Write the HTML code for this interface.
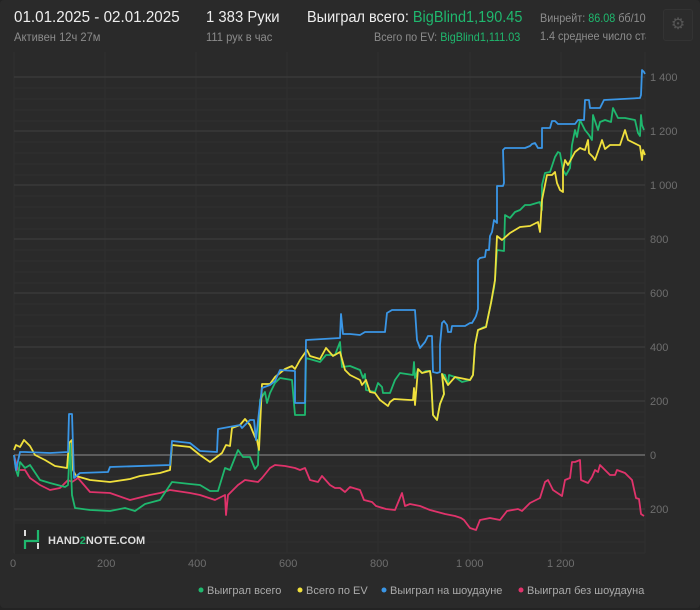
<!DOCTYPE html>
<html><head><meta charset="utf-8"><style>
html,body{margin:0;padding:0;background:#232323;width:700px;height:610px;overflow:hidden;font-family:"Liberation Sans",sans-serif}
.card{position:absolute;left:0;top:0;width:700px;height:608px;background:#2a2a2a;border-radius:4px}
.t{position:absolute;white-space:nowrap;transform-origin:0 0}
</style></head><body>
<div class="card"></div>
<div class="t" style="left:14px;top:9px;font-size:16px;color:#eee;transform:scaleX(0.95)">01.01.2025 - 02.01.2025</div>
<div class="t" style="left:14px;top:30px;font-size:12px;color:#8c8c8c;transform:scaleX(0.93)">Активен 12ч 27м</div>
<div class="t" style="left:206px;top:9px;font-size:16px;color:#eee;transform:scaleX(0.93)">1 383 Руки</div>
<div class="t" style="left:206px;top:30px;font-size:12px;color:#8c8c8c;transform:scaleX(0.93)">111 рук в час</div>
<div class="t" style="left:307px;top:9px;font-size:16px;color:#eee;transform:scaleX(0.905)">Выиграл всего: <span style="color:#1fb86e">BigBlind1,190.45</span></div>
<div class="t" style="left:374px;top:30px;font-size:12px;color:#8c8c8c;transform:scaleX(0.9)">Всего по EV: <span style="color:#1fb86e">BigBlind1,111.03</span></div>
<div style="position:absolute;left:540px;top:11px;width:106px;height:36px;overflow:hidden">
<div class="t" style="left:0;top:0;font-size:12px;color:#8c8c8c;transform:scaleX(0.9)">Винрейт: <span style="color:#1fb86e">86.08</span> бб/100</div>
<div class="t" style="left:0;top:18px;font-size:12px;color:#8c8c8c;transform:scaleX(0.9)">1.4 среднее число ставок</div>
</div>
<div style="position:absolute;left:663px;top:9px;width:28px;height:30px;border:1px solid #333;border-radius:3px;background:#2c2c2c;color:#555;font-size:16px;text-align:center;line-height:30px">⚙</div>
<svg style="position:absolute;left:0;top:0" width="700" height="610">
<g stroke="#303030" stroke-width="1">
<line x1="14" y1="88" x2="645" y2="88"/><line x1="14" y1="99" x2="645" y2="99"/><line x1="14" y1="110" x2="645" y2="110"/><line x1="14" y1="121" x2="645" y2="121"/>
<line x1="14" y1="142" x2="645" y2="142"/><line x1="14" y1="153" x2="645" y2="153"/><line x1="14" y1="164" x2="645" y2="164"/><line x1="14" y1="175" x2="645" y2="175"/>
<line x1="14" y1="196" x2="645" y2="196"/><line x1="14" y1="207" x2="645" y2="207"/><line x1="14" y1="218" x2="645" y2="218"/><line x1="14" y1="229" x2="645" y2="229"/>
<line x1="14" y1="250" x2="645" y2="250"/><line x1="14" y1="261" x2="645" y2="261"/><line x1="14" y1="272" x2="645" y2="272"/><line x1="14" y1="283" x2="645" y2="283"/>
<line x1="14" y1="304" x2="645" y2="304"/><line x1="14" y1="315" x2="645" y2="315"/><line x1="14" y1="326" x2="645" y2="326"/><line x1="14" y1="337" x2="645" y2="337"/>
<line x1="14" y1="358" x2="645" y2="358"/><line x1="14" y1="369" x2="645" y2="369"/><line x1="14" y1="380" x2="645" y2="380"/><line x1="14" y1="391" x2="645" y2="391"/>
<line x1="14" y1="412" x2="645" y2="412"/><line x1="14" y1="423" x2="645" y2="423"/><line x1="14" y1="434" x2="645" y2="434"/><line x1="14" y1="445" x2="645" y2="445"/>
<line x1="14" y1="466" x2="645" y2="466"/><line x1="14" y1="477" x2="645" y2="477"/><line x1="14" y1="488" x2="645" y2="488"/><line x1="14" y1="499" x2="645" y2="499"/>
<line x1="14" y1="520" x2="645" y2="520"/><line x1="14" y1="531" x2="645" y2="531"/><line x1="14" y1="542" x2="645" y2="542"/><line x1="14" y1="553" x2="645" y2="553"/>
<line x1="14" y1="52" x2="14" y2="553"/><line x1="105" y1="52" x2="105" y2="553"/><line x1="196" y1="52" x2="196" y2="553"/><line x1="287" y1="52" x2="287" y2="553"/><line x1="378" y1="52" x2="378" y2="553"/><line x1="470" y1="52" x2="470" y2="553"/><line x1="561" y1="52" x2="561" y2="553"/><line x1="645" y1="52" x2="645" y2="553"/>
</g>
<g stroke="#404040" stroke-width="1">
<line x1="14" y1="77" x2="645" y2="77"/><line x1="14" y1="131" x2="645" y2="131"/><line x1="14" y1="185" x2="645" y2="185"/><line x1="14" y1="239" x2="645" y2="239"/><line x1="14" y1="293" x2="645" y2="293"/><line x1="14" y1="347" x2="645" y2="347"/><line x1="14" y1="401" x2="645" y2="401"/><line x1="14" y1="509" x2="645" y2="509"/>
</g>
<line x1="14" y1="455" x2="645" y2="455" stroke="#7a7a7a" stroke-width="1.2"/>
<g fill="#6e6e6e" font-size="11" font-family="Liberation Sans,sans-serif">
<text x="650" y="81">1 400</text><text x="650" y="135">1 200</text><text x="650" y="189">1 000</text><text x="650" y="243">800</text><text x="650" y="297">600</text><text x="650" y="351">400</text><text x="650" y="405">200</text><text x="650" y="459">0</text><text x="650" y="513">200</text>
<text x="10" y="567">0</text><text x="97" y="567">200</text><text x="188" y="567">400</text><text x="279" y="567">600</text><text x="370" y="567">800</text><text x="456" y="567">1 000</text><text x="547" y="567">1 200</text>
</g>
<rect x="15" y="524" width="125" height="30" fill="#272727"/>
<g stroke="#ddd" stroke-width="2"><line x1="25" y1="530" x2="25" y2="536"/><line x1="38" y1="543" x2="38" y2="549"/></g>
<path d="M25 549 V541 H38 V530" stroke="#1fb86e" stroke-width="2.2" fill="none"/>
<text x="48" y="544" fill="#ddd" font-size="11" font-weight="bold" font-family="Liberation Sans,sans-serif">HAND<tspan fill="#1fb86e">2</tspan>NOTE.COM</text>
<g fill="none" stroke-width="1.8" stroke-linejoin="round">
<polyline stroke="#e0336b" points="14,455 18,470 25,470 30,478 40,485 50,490 60,488 68,480 72,482 78,478 90,492 110,493 130,500 150,495 160,493 170,490 190,493 200,495 215,500 225,495 226,515 228,495 238,485 245,480 258,482 262,478 270,468 275,465 285,466 295,468 300,470 305,468 310,480 318,482 322,476 330,485 335,488 340,488 345,492 350,487 360,490 364,500 372,502 376,506 386,509 395,510 402,493 405,506 410,504 420,506 430,510 445,514 455,516 461,518 464,520 470,528 476,530 480,520 490,518 500,520 507,511 518,509 522,511 530,503 540,498 545,482 548,480 553,490 562,496 565,480 570,478 572,462 575,462 580,460 581,480 588,483 592,477 595,470 598,472 600,465 605,470 610,475 615,475 617,470 625,473 632,480 636,498 639,499 641,514 644,516"/>
<polyline stroke="#1fb86e" points="14,455 16,470 18,476 20,462 25,468 30,465 40,480 50,483 65,487 68,485 70,443 72,495 75,508 90,510 110,511 125,508 135,511 145,504 160,500 172,482 190,484 200,485 210,491 218,491 225,468 230,470 238,450 243,457 250,457 255,469 258,465 260,400 265,392 267,403 270,393 275,383 280,378 292,380 295,415 305,415 306,358 320,362 326,355 335,355 340,342 342,367 350,366 360,370 363,378 365,374 366,390 375,392 378,383 382,387 383,393 390,393 395,380 400,373 413,375 414,362 415,378 418,369 422,373 426,371 430,371 431,378 433,415 437,420 440,404 444,394 442,374 445,375 448,385 449,375 455,377 462,382 470,380 473,375 475,345 478,330 484,327 486,327 488,317 491,303 494,288 495,280 497,250 504,251 505,215 510,218 515,212 520,210 525,205 530,205 540,202 542,210 542,185 545,173 550,172 555,157 558,152 560,153 563,170 566,175 570,168 572,145 575,130 577,137 580,120 585,130 589,135 592,140 593,115 598,130 600,122 605,120 611,122 613,108 618,118 625,118 635,120 638,133 640,136 641,115 642,125 644,130"/>
<polyline stroke="#f0e03c" points="14,450 16,445 20,447 24,440 30,446 35,455 45,460 55,466 67,468 69,443 72,440 73,470 76,476 90,480 110,482 130,479 140,476 160,473 170,470 172,445 190,447 200,455 210,462 218,456 222,453 226,445 230,446 232,428 240,425 245,419 250,425 255,437 257,440 259,450 262,384 270,384 275,377 285,369 292,366 295,369 300,360 307,350 310,356 320,359 326,348 333,356 340,352 345,370 350,375 360,380 362,385 366,380 370,392 375,393 380,400 388,406 390,402 394,399 410,400 413,400 414,388 415,405 418,369 422,373 430,371 431,378 433,415 437,420 440,404 444,394 442,374 448,385 455,377 470,380 473,375 475,345 478,330 486,327 491,303 495,280 497,236 502,240 510,233 520,227 530,226 538,222 540,232 542,200 547,175 552,175 555,172 557,183 560,190 563,192 563,170 565,160 568,165 575,152 580,148 585,150 588,140 589,153 593,157 595,160 600,146 602,140 605,149 610,145 620,145 625,130 628,140 640,146 642,160 643,150 645,155"/>
<polyline stroke="#3a96e6" points="14,455 16,470 20,452 25,452 50,453 68,452 69,414 72,414 74,478 80,473 108,472 110,467 170,465 172,441 190,443 200,451 217,452 218,429 240,425 242,428 250,420 254,420 256,440 259,412 262,388 270,385 275,381 280,370 295,371 295,403 305,403 306,340 340,338 341,314 343,334 350,334 360,335 365,332 385,332 387,313 392,310 415,310 417,340 420,348 425,342 428,336 432,336 433,372 437,373 440,372 440,345 442,323 444,321 447,325 448,332 451,332 452,326 465,326 470,323 472,323 475,318 476,316 478,309 478,260 480,258 485,257 486,250 489,250 490,236 492,232 494,220 497,223 497,186 503,186 504,183 503,150 505,148 525,148 530,146 532,144 535,143 538,148 542,148 542,128 550,128 552,121 555,121 558,124 575,124 578,120 584,120 585,100 589,100 590,108 600,108 601,106 604,100 640,98 641,95 642,70 644,72 645,74"/>
</g>
<g font-size="11" font-family="Liberation Sans,sans-serif" fill="#aaa">
<circle cx="201" cy="590" r="2.5" fill="#1fb86e"/><text x="207" y="594">Выиграл всего</text>
<circle cx="300" cy="590" r="2.5" fill="#f0e03c"/><text x="306" y="594">Всего по EV</text>
<circle cx="384" cy="590" r="2.5" fill="#3a96e6"/><text x="390" y="594">Выиграл на шоудауне</text>
<circle cx="521" cy="590" r="2.5" fill="#e0336b"/><text x="527" y="594">Выиграл без шоудауна</text>
</g>
</svg>
</body></html>
